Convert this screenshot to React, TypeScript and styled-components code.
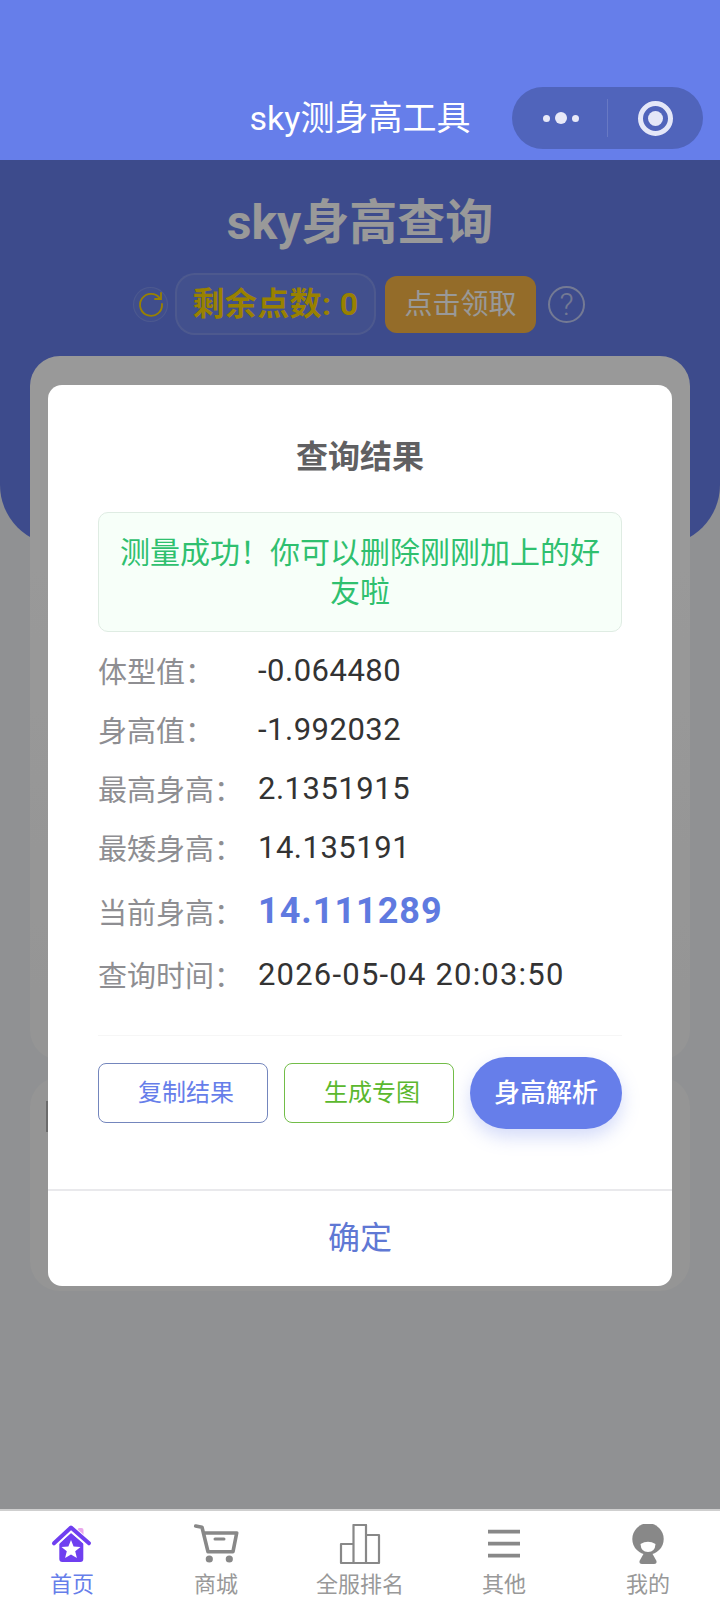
import React from "react";
import styled, { createGlobalStyle } from "styled-components";

const GlobalStyle = createGlobalStyle`
  html, body {
    margin: 0;
    padding: 0;
    background: #f0f2f5;
    font-family: Roboto, "Noto Sans CJK SC", sans-serif;
  }
  * {
    box-sizing: border-box;
  }
`;

const Page = styled.div`
  position: relative;
  width: 720px;
  height: 1610px;
  display: flex;
  flex-direction: column;
  overflow: hidden;
`;

const NavBar = styled.header`
  height: 160px;
  padding: 86px 17px 12px;
  background: #667eea;
  display: grid;
  grid-template-columns: 1fr auto 1fr;
  align-items: center;
  flex-shrink: 0;
`;

const NavTitle = styled.div`
  grid-column: 2;
  color: #fff;
  font-size: 34px;
  line-height: 64px;
  white-space: nowrap;
`;

const Capsule = styled.div`
  grid-column: 3;
  justify-self: end;
  width: 191px;
  height: 62px;
  border-radius: 31px;
  background: #5064bb;
  display: grid;
  grid-template-columns: 96px 95px;
  align-items: center;
`;

const CapsuleDots = styled.div`
  height: 38px;
  display: flex;
  align-items: center;
  justify-content: center;
  gap: 5px;
  border-right: 1px solid rgba(255, 255, 255, 0.14);
  padding-left: 3px;
`;

const Dot = styled.span<{ $size: number }>`
  width: ${(p) => p.$size}px;
  height: ${(p) => p.$size}px;
  border-radius: 50%;
  background: #e8e9f8;
`;

const CapsuleTarget = styled.div`
  display: flex;
  justify-content: center;
`;

const TargetRing = styled.div`
  width: 35px;
  height: 35px;
  border-radius: 50%;
  border: 5px solid #e4e7f8;
  display: flex;
  align-items: center;
  justify-content: center;
`;

const TargetCore = styled.span`
  width: 15px;
  height: 15px;
  border-radius: 50%;
  background: #e4e7f8;
`;

const Content = styled.main`
  flex: 1;
  display: flex;
  flex-direction: column;
`;

const Hero = styled.section`
  height: 385px;
  padding-top: 31px;
  background: #667eea;
  border-radius: 0 0 60px 60px;
  text-align: center;
`;

const HeroTitle = styled.h1`
  margin: 0;
  color: #fff;
  font-size: 48px;
  font-weight: 700;
  line-height: 64px;
`;

const PointsRow = styled.div`
  margin-top: 18px;
  padding-right: 2px;
  display: flex;
  align-items: center;
  justify-content: center;
`;

const RefreshButton = styled.div`
  width: 35px;
  height: 35px;
  margin-right: 7px;
  border-radius: 50%;
  background: rgba(255, 255, 255, 0.04);
  border: 1px solid rgba(255, 255, 255, 0.14);
  display: flex;
  align-items: center;
  justify-content: center;
`;

const PointsPill = styled.div`
  width: 201px;
  height: 62px;
  border-radius: 20px;
  background: rgba(255, 255, 255, 0.06);
  border: 2px solid rgba(255, 255, 255, 0.13);
  color: #ffd700;
  font-size: 32px;
  font-weight: 700;
  letter-spacing: 0.4px;
  line-height: 58px;
  white-space: nowrap;
`;

const ClaimButton = styled.div`
  width: 151px;
  height: 57px;
  margin-left: 9px;
  border-radius: 12px;
  background: #f7b545;
  color: #fff;
  font-size: 28px;
  line-height: 57px;
`;

const HelpButton = styled.div`
  width: 37px;
  height: 37px;
  margin-left: 12px;
  border-radius: 50%;
  border: 2px solid rgba(255, 255, 255, 0.6);
  color: rgba(255, 255, 255, 0.6);
  font-size: 31px;
  font-weight: 300;
  line-height: 33px;
`;

const Card = styled.section<{ $overlap?: boolean; $height: number }>`
  height: ${(p) => p.$height}px;
  margin: ${(p) => (p.$overlap ? "-189px 30px 0" : "17px 30px 0")};
  padding: 24px 16px;
  border-radius: 30px;
  background: ${(p) => (p.$overlap ? "linear-gradient(#fff, #fff 30%, #f8f8f8 100%)" : "#f8f8f8")};
`;

const CardMark = styled.div`
  width: 8px;
  height: 31px;
  background: #b5b5b5;
`;

const Overlay = styled.div`
  position: absolute;
  left: 0;
  right: 0;
  top: 160px;
  bottom: 100px;
  background: rgba(0, 0, 0, 0.4);
  display: flex;
  align-items: center;
  justify-content: center;
`;

const Modal = styled.div`
  width: 624px;
  height: 901px;
  border-radius: 14px;
  background: #fff;
  display: flex;
  flex-direction: column;
`;

const ModalBody = styled.div`
  flex: 1;
  padding: 48px 50px 0;
`;

const ModalTitle = styled.h2`
  margin: 0;
  color: #606062;
  font-size: 32px;
  font-weight: 700;
  line-height: 48px;
  text-align: center;
`;

const SuccessBanner = styled.div`
  height: 120px;
  margin-top: 31px;
  padding: 20px 20px;
  border-radius: 10px;
  background: #f7fff9;
  border: 1px solid #dfece3;
  color: #2fc06f;
  font-size: 30px;
  line-height: 39px;
  text-align: center;
`;

const ResultList = styled.div`
  margin-top: 9px;
`;

const ResultRow = styled.div<{ $tall?: boolean }>`
  height: ${(p) => (p.$tall ? 68 : 59)}px;
  display: flex;
  align-items: center;
`;

const ResultLabel = styled.span`
  width: 160px;
  flex-shrink: 0;
  color: #8e8e92;
  font-size: 29px;
`;

const ResultValue = styled.span<{ $highlight?: boolean; $spacing: number }>`
  color: ${(p) => (p.$highlight ? "#5f7ae0" : "#333")};
  font-size: ${(p) => (p.$highlight ? 36 : 31)}px;
  font-weight: ${(p) => (p.$highlight ? 700 : 400)};
  letter-spacing: ${(p) => p.$spacing}px;
  white-space: nowrap;
`;

const Divider = styled.div`
  height: 1px;
  margin-top: 31px;
  background: #f6f6f6;
`;

const ActionRow = styled.div`
  height: 72px;
  margin-top: 21px;
  display: flex;
  align-items: center;
  gap: 16px;
`;

const OutlineButton = styled.div<{ $color: string; $border: string }>`
  width: 170px;
  height: 60px;
  padding-left: 6px;
  border-radius: 8px;
  border: 1px solid ${(p) => p.$border};
  color: ${(p) => p.$color};
  font-size: 24px;
  line-height: 58px;
  text-align: center;
`;

const PrimaryButton = styled.div`
  width: 152px;
  height: 72px;
  border-radius: 36px;
  background: #667eea;
  box-shadow: 0 8px 18px rgba(102, 126, 234, 0.28);
  color: #fff;
  font-size: 26px;
  font-weight: 500;
  line-height: 72px;
  text-align: center;
`;

const ModalFooter = styled.div`
  height: 97px;
  border-top: 2px solid #e9e9ec;
  color: #5f78d4;
  font-size: 32px;
  line-height: 95px;
  text-align: center;
`;

const TabBar = styled.nav`
  height: 101px;
  margin-top: -1px;
  position: relative;
  background: #fff;
  border-top: 2px solid #cfcfcf;
  display: grid;
  grid-template-columns: repeat(5, 1fr);
  flex-shrink: 0;
`;

const TabItem = styled.div<{ $active?: boolean }>`
  display: flex;
  flex-direction: column;
  align-items: center;
  padding-top: 13px;
  color: ${(p) => (p.$active ? "#667eea" : "#999")};
  font-size: 22px;
  line-height: 30px;
`;

const TabIcon = styled.svg`
  width: 46px;
  height: 42px;
  display: block;
  margin-bottom: 4px;
`;

const rows = [
  { label: "体型值：", value: "-0.064480", spacing: 0.5 },
  { label: "身高值：", value: "-1.992032", spacing: 0.5 },
  { label: "最高身高：", value: "2.1351915", spacing: 0.5 },
  { label: "最矮身高：", value: "14.135191", spacing: 0.5 },
  { label: "当前身高：", value: "14.111289", spacing: 1, highlight: true },
  { label: "查询时间：", value: "2026-05-04 20:03:50", spacing: 1.2 },
];

const HomeIcon = () => (
  <TabIcon viewBox="0 0 46 42">
    <rect x="28.5" y="4" width="6" height="11" rx="2" fill="#eaa8ec" />
    <path d="M10.3 19 L22 9 L34.3 19 V35 Q34.3 38 31.3 38 H13.3 Q10.3 38 10.3 35 Z" fill="#6f3ff0" />
    <path d="M4 21 L22 4 L41 21" fill="none" stroke="#fff" strokeWidth="7" />
    <path
      d="M5 19.3 L22 3.5 L40 19.3"
      fill="none"
      stroke="#6f3ff0"
      strokeWidth="4"
      strokeLinecap="round"
      strokeLinejoin="round"
    />
    <path
      d="M22 16 L24.6 22.4 L31.5 22.9 L26.2 27.3 L27.9 34 L22 30.4 L16.1 34 L17.8 27.3 L12.5 22.9 L19.4 22.4 Z"
      fill="#fff"
    />
  </TabIcon>
);

const CartIcon = () => (
  <TabIcon viewBox="0 0 46 42">
    <path
      d="M2.7 2 L9 3.3 L15 27.7 H40 L43.7 9 H10.3"
      fill="none"
      stroke="#888"
      strokeWidth="3.6"
      strokeLinecap="round"
      strokeLinejoin="round"
    />
    <path d="M22 15 H31" stroke="#888" strokeWidth="3" strokeLinecap="round" />
    <circle cx="16.3" cy="35" r="3.6" fill="#888" />
    <circle cx="36.3" cy="35" r="3.6" fill="#888" />
  </TabIcon>
);

const RankIcon = () => (
  <TabIcon viewBox="0 0 46 42">
    <path
      d="M4 20 H16.5 V1 H29 V11 H42 V39 H4 Z M16.5 20 V39 M29 11 V39"
      fill="none"
      stroke="#888"
      strokeWidth="2.2"
      strokeLinejoin="round"
    />
  </TabIcon>
);

const MenuIcon = () => (
  <TabIcon viewBox="0 0 46 42">
    <path d="M7 7.7 H39 M7 19.7 H39 M7 31.7 H39" stroke="#888" strokeWidth="3.8" />
  </TabIcon>
);

const ProfileIcon = () => (
  <TabIcon viewBox="0 0 46 42">
    <circle cx="23" cy="15" r="15.7" fill="#888" />
    <path d="M19 29 H27 L31.5 37 Q32 40 29 40 H17 Q14 40 14.5 37 Z" fill="#888" />
    <path d="M15.5 20 Q23 15.5 30.5 20 Q30 28 23 28 Q16 28 15.5 20 Z" fill="#fff" />
  </TabIcon>
);

export default function App() {
  return (
    <>
      <GlobalStyle />
      <Page>
        <NavBar>
          <NavTitle>sky测身高工具</NavTitle>
          <Capsule>
            <CapsuleDots>
              <Dot $size={7} />
              <Dot $size={12} />
              <Dot $size={7} />
            </CapsuleDots>
            <CapsuleTarget>
              <TargetRing>
                <TargetCore />
              </TargetRing>
            </CapsuleTarget>
          </Capsule>
        </NavBar>

        <Content>
          <Hero>
            <HeroTitle>sky身高查询</HeroTitle>
            <PointsRow>
              <RefreshButton>
                <svg width="28" height="28" viewBox="0 0 28 28" fill="none">
                  <path
                    d="M23 8.5 A11 11 0 1 0 25 14"
                    stroke="#ffd700"
                    strokeWidth="1.8"
                    strokeLinecap="round"
                  />
                  <path d="M24 3 V9 H18" stroke="#ffd700" strokeWidth="1.8" strokeLinecap="round" />
                </svg>
              </RefreshButton>
              <PointsPill>剩余点数: 0</PointsPill>
              <ClaimButton>点击领取</ClaimButton>
              <HelpButton>?</HelpButton>
            </PointsRow>
          </Hero>
          <Card $overlap $height={704} />
          <Card $height={214}>
            <CardMark />
          </Card>
        </Content>

        <Overlay>
          <Modal>
            <ModalBody>
              <ModalTitle>查询结果</ModalTitle>
              <SuccessBanner>测量成功！你可以删除刚刚加上的好友啦</SuccessBanner>
              <ResultList>
                {rows.map((row) => (
                  <ResultRow key={row.label} $tall={row.highlight}>
                    <ResultLabel>{row.label}</ResultLabel>
                    <ResultValue $highlight={row.highlight} $spacing={row.spacing}>
                      {row.value}
                    </ResultValue>
                  </ResultRow>
                ))}
              </ResultList>
              <Divider />
              <ActionRow>
                <OutlineButton $color="#667eea" $border="#7486bd">
                  复制结果
                </OutlineButton>
                <OutlineButton $color="#5bb82e" $border="#72bd48">
                  生成专图
                </OutlineButton>
                <PrimaryButton>身高解析</PrimaryButton>
              </ActionRow>
            </ModalBody>
            <ModalFooter>确定</ModalFooter>
          </Modal>
        </Overlay>

        <TabBar>
          <TabItem $active>
            <HomeIcon />
            首页
          </TabItem>
          <TabItem>
            <CartIcon />
            商城
          </TabItem>
          <TabItem>
            <RankIcon />
            全服排名
          </TabItem>
          <TabItem>
            <MenuIcon />
            其他
          </TabItem>
          <TabItem>
            <ProfileIcon />
            我的
          </TabItem>
        </TabBar>
      </Page>
    </>
  );
}
